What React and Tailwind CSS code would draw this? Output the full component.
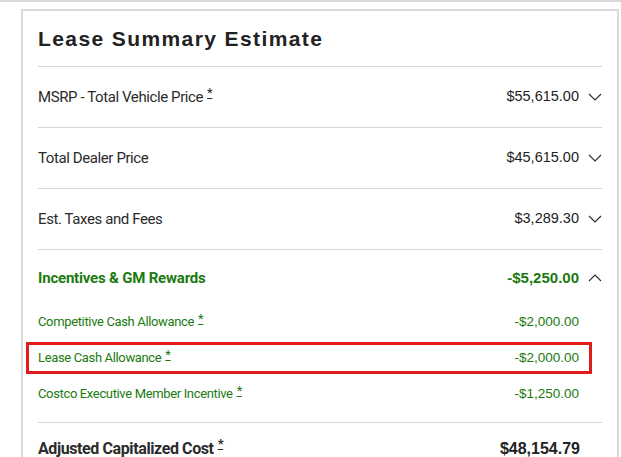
function Chevron({ up }) {
  return (
    <svg width="14" height="8" viewBox="0 0 14 8" fill="none" className="ml-[9px] shrink-0">
      <path
        d={up ? 'M1 7L7 1L13 7' : 'M1 1L7 7L13 1'}
        stroke="#2b2b2b"
        strokeWidth="1.1"
      />
    </svg>
  )
}

function Star() {
  return (
    <span className="ml-1 inline-block align-top text-[13px] leading-none underline underline-offset-1">*</span>
  )
}

const labelFont = { fontFamily: 'Roboto, "Liberation Sans", sans-serif' }
const amountFont = { fontFamily: '"Liberation Sans", Arial, sans-serif' }

function Row({ label, amount, star, last }) {
  return (
    <div className={`flex h-[61px] items-center justify-between ${last ? '' : 'border-b border-[#d6d6d6]'}`}>
      <div className="text-[15px] tracking-[-0.4px] text-[#2b2b2b]" style={labelFont}>
        {label}
        {star ? <Star /> : null}
      </div>
      <div className="flex items-center">
        <span className="text-[14.5px] text-[#222]" style={amountFont}>{amount}</span>
        <Chevron />
      </div>
    </div>
  )
}

function SubRow({ label, amount, boxed }) {
  return (
    <div
      className={`flex items-center justify-between ${boxed ? 'my-[2px] -ml-[12px] mr-[10px] h-[32px] border-[3px] border-[#e21b1b] pl-[9px] pr-[10px]' : 'h-[36px] pr-[23px]'}`}
    >
      <div className="text-[13px] tracking-[-0.35px] text-[#1b7a10]" style={labelFont}>
        {label}
        <Star />
      </div>
      <div className="text-[13.5px] text-[#1b7a10]" style={amountFont}>
        {amount}
      </div>
    </div>
  )
}

export default function App() {
  return (
    <div className="h-[457px] w-[621px] overflow-hidden border-t-2 border-[#d9d9d9] bg-white">
      <div className="ml-[21px] mt-[7px] w-[598px] border-l-2 border-r-2 border-t-2 border-[#d9d9d9] bg-white pl-[15px] pr-[15px]">
        <div className="flex h-[56px] items-center border-b border-[#d6d6d6]">
          <h1
            className="text-[21px] font-bold tracking-[1.4px] text-[#222]"
            style={{ fontFamily: '"Liberation Sans", Arial, sans-serif' }}
          >
            Lease Summary Estimate
          </h1>
        </div>
        <Row label="MSRP - Total Vehicle Price" amount="$55,615.00" star />
        <Row label="Total Dealer Price" amount="$45,615.00" />
        <Row label="Est. Taxes and Fees" amount="$3,289.30" />
        <div className="border-b border-[#d6d6d6] pb-[10px]">
          <div className="flex h-[54px] items-center justify-between pt-[2px]">
            <div className="text-[15px] font-bold tracking-[-0.2px] text-[#1b7a10]" style={labelFont}>
              Incentives &amp; GM Rewards
            </div>
            <div className="flex items-center">
              <span className="text-[15px] font-bold text-[#1b7a10]" style={amountFont}>-$5,250.00</span>
              <Chevron up />
            </div>
          </div>
          <SubRow label="Competitive Cash Allowance" amount="-$2,000.00" />
          <SubRow label="Lease Cash Allowance" amount="-$2,000.00" boxed />
          <SubRow label="Costco Executive Member Incentive" amount="-$1,250.00" />
        </div>
        <div className="flex h-[52px] items-center justify-between">
          <div className="text-[16px] font-bold tracking-[-0.4px] text-[#2b2b2b]" style={labelFont}>
            Adjusted Capitalized Cost
            <Star />
          </div>
          <span className="pr-[22px] text-[16px] font-bold text-[#222]" style={amountFont}>$48,154.79</span>
        </div>
      </div>
    </div>
  )
}
